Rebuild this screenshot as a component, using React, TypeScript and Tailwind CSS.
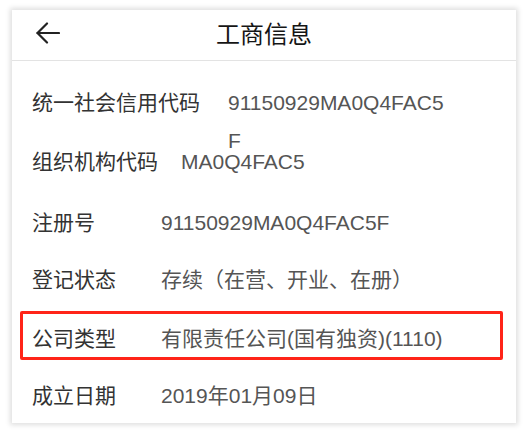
import React from "react";

const font = { fontFamily: '"Liberation Sans", "Noto Sans CJK SC", sans-serif' };

export default function App() {
  return (
    <div className="w-[530px] h-[435px] bg-white pt-[10px] pl-[12px]" style={font}>
      <div className="w-[504px] h-[413px] bg-white shadow-[0_0_5px_2px_rgba(0,0,0,0.13)] flex flex-col">
        <div className="h-[51px] relative flex items-center justify-center border-b border-[#e3e3e3] shrink-0">
          <svg className="absolute left-[24px] top-[12px]" width="24" height="22" viewBox="0 0 24 22" fill="none">
            <path d="M1.5 11 H23" stroke="#222" strokeWidth="2.2" strokeLinecap="round" />
            <path d="M11 1.5 L1.5 11 L11 20.5" stroke="#222" strokeWidth="2.2" strokeLinecap="round" strokeLinejoin="round" />
          </svg>
          <span className="text-[24px] leading-none text-[#151515]">工商信息</span>
        </div>
        <div className="pt-[23px] pl-[20px] flex flex-col">
          <div className="h-[59px] flex items-start text-[21px] leading-[37.5px]">
            <span className="text-[#333] mr-[28px] shrink-0">统一社会信用代码</span>
            <span className="text-[#555] w-[222px] break-all">91150929MA0Q4FAC5F</span>
          </div>
          <div className="h-[61px] flex items-start text-[21px] leading-[37.5px]">
            <span className="text-[#333] mr-[23px] shrink-0">组织机构代码</span>
            <span className="text-[#555]">MA0Q4FAC5</span>
          </div>
          <div className="h-[57px] flex items-start text-[21px] leading-[37.5px]">
            <span className="text-[#333] w-[129px] shrink-0">注册号</span>
            <span className="text-[#555]">91150929MA0Q4FAC5F</span>
          </div>
          <div className="h-[59px] flex items-start text-[21px] leading-[37.5px]">
            <span className="text-[#333] w-[129px] shrink-0">登记状态</span>
            <span className="text-[#555]">存续（在营、开业、在册）</span>
          </div>
          <div className="h-[57px] relative flex items-start text-[21px] leading-[37.5px]">
            <div className="absolute left-[-12px] top-[-9px] w-[483px] h-[49px] border-[3px] border-[#ff2418] rounded-[2px]" />
            <span className="text-[#333] w-[129px] shrink-0">公司类型</span>
            <span className="text-[#555]">有限责任公司(国有独资)(1110)</span>
          </div>
          <div className="h-[57px] flex items-start text-[21px] leading-[37.5px]">
            <span className="text-[#333] w-[129px] shrink-0">成立日期</span>
            <span className="text-[#555]">2019年01月09日</span>
          </div>
        </div>
      </div>
    </div>
  );
}
